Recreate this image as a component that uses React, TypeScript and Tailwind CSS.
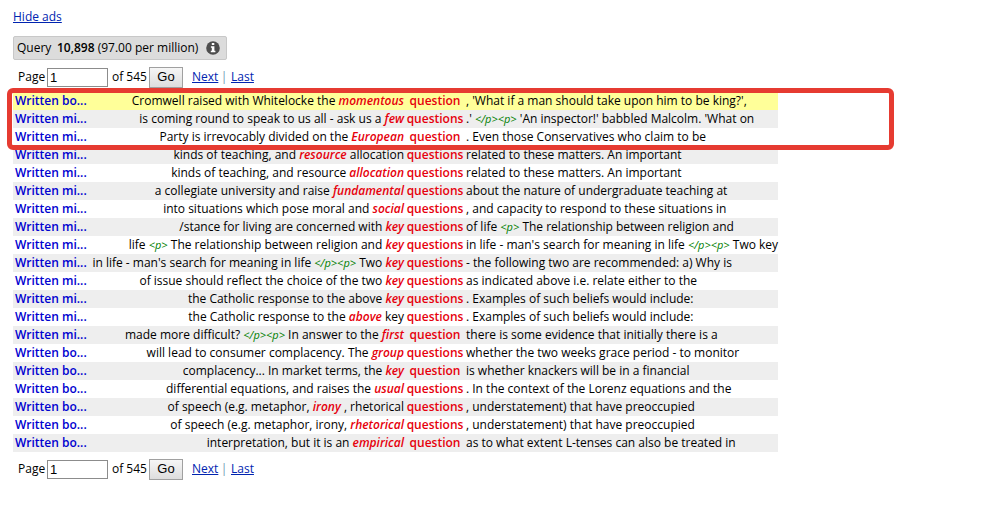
import { Fragment } from "react";

type Line = { source: "bo" | "mi"; left: string; node: string; right: string };

// *word* marks the collocate, <p> and </p> are structure tags of the corpus.
const lines: Line[] = [
  { source: "bo", left: "Cromwell raised with Whitelocke the *momentous*", node: "question", right: ", 'What if a man should take upon him to be king?'," },
  { source: "mi", left: "is coming round to speak to us all - ask us a *few*", node: "questions", right: ".' </p><p> 'An inspector!' babbled Malcolm. 'What on" },
  { source: "mi", left: "Party is irrevocably divided on the *European*", node: "question", right: ". Even those Conservatives who claim to be" },
  { source: "mi", left: "kinds of teaching, and *resource* allocation", node: "questions", right: "related to these matters. An important" },
  { source: "mi", left: "kinds of teaching, and resource *allocation*", node: "questions", right: "related to these matters. An important" },
  { source: "mi", left: "a collegiate university and raise *fundamental*", node: "questions", right: "about the nature of undergraduate teaching at" },
  { source: "mi", left: "into situations which pose moral and *social*", node: "questions", right: ", and capacity to respond to these situations in" },
  { source: "mi", left: "/stance for living are concerned with *key*", node: "questions", right: "of life <p> The relationship between religion and" },
  { source: "mi", left: "life <p> The relationship between religion and *key*", node: "questions", right: "in life - man's search for meaning in life </p><p> Two key" },
  { source: "mi", left: "in life - man's search for meaning in life </p><p> Two *key*", node: "questions", right: "- the following two are recommended: a) Why is" },
  { source: "mi", left: "of issue should reflect the choice of the two *key*", node: "questions", right: "as indicated above i.e. relate either to the" },
  { source: "mi", left: "the Catholic response to the above *key*", node: "questions", right: ". Examples of such beliefs would include:" },
  { source: "mi", left: "the Catholic response to the *above* key", node: "questions", right: ". Examples of such beliefs would include:" },
  { source: "mi", left: "made more difficult? </p><p> In answer to the *first*", node: "question", right: "there is some evidence that initially there is a" },
  { source: "bo", left: "will lead to consumer complacency. The *group*", node: "questions", right: "whether the two weeks grace period - to monitor" },
  { source: "bo", left: "complacency... In market terms, the *key*", node: "question", right: "is whether knackers will be in a financial" },
  { source: "bo", left: "differential equations, and raises the *usual*", node: "questions", right: ". In the context of the Lorenz equations and the" },
  { source: "bo", left: "of speech (e.g. metaphor, *irony* , rhetorical", node: "questions", right: ", understatement) that have preoccupied" },
  { source: "bo", left: "of speech (e.g. metaphor, irony, *rhetorical*", node: "questions", right: ", understatement) that have preoccupied" },
  { source: "bo", left: "interpretation, but it is an *empirical*", node: "question", right: "as to what extent L-tenses can also be treated in" },
];

function Context({ text }: { text: string }) {
  return (
    <>
      {text.split(/(\*\w+\*|(?:<\/?p>)+)/).map((part, i) => {
        if (part.startsWith("*")) {
          return <b key={i} className="font-semibold italic text-[#e6000c]">{part.slice(1, -1)}</b>;
        }
        if (part.startsWith("<")) {
          return <i key={i} className="text-[11px] text-[#008000]">{part}</i>;
        }
        return <Fragment key={i}>{part}</Fragment>;
      })}
    </>
  );
}

function Pager({ id }: { id: string }) {
  return (
    <form className="flex h-[22px] items-center pl-[5px]" onSubmit={(e) => e.preventDefault()}>
      <label htmlFor={id} className="w-[29px]">Page</label>
      <input
        id={id}
        defaultValue="1"
        className="h-[19px] w-[61px] border border-[#8c8c8c] bg-white px-0.5 font-['Liberation_Sans',Arial,sans-serif] text-[13px] outline-none"
      />
      <span className="ml-1 w-[37px] whitespace-nowrap">of 545</span>
      <button
        type="submit"
        className="h-[21px] w-[34px] border border-[#a0a0a0] bg-linear-to-b from-[#f6f6f6] to-[#dddddd] font-['Liberation_Sans',Arial,sans-serif] text-[13px]"
      >
        Go
      </button>
      <a href="#next" className="ml-[9px] w-[25px] text-[#0024b0] underline">Next</a>
      <span className="w-3.5 text-center text-[#6f95b5]">|</span>
      <a href="#last" className="text-[#0024b0] underline">Last</a>
    </form>
  );
}

export default function App() {
  return (
    <main className="min-h-screen bg-white px-[13px] pt-2 font-['Trebuchet_MS','Open_Sans',sans-serif] text-[12px] leading-[18px] text-black">
      <div><a href="#ads" className="text-[#0024b0] underline">Hide ads</a></div>

      <div className="mt-2.5 flex h-6 w-[214px] items-center rounded-xs border border-[#c8c8c8] bg-[#dcdcdc] pl-[3px] whitespace-nowrap">
        <span className="w-10">Query</span>
        <span className="w-[149px]"><b className="font-semibold">10,898</b> (97.00 per million)</span>
        <svg viewBox="0 0 14 14" className="size-3.5" role="img" aria-label="Info">
          <circle cx="7" cy="7" r="6.8" fill="#4d4d4d" />
          <path fill="#fff" d="M5.8 2h2.5v2H5.8zM4.9 5.3h3.5v4.4h1v1.5H4.8V9.7h1V6.8h-.9z" />
        </svg>
      </div>

      <div className="mt-1.5"><Pager id="page-top" /></div>

      <div className="relative mt-1 w-[765px]">
        <table className="w-full table-fixed border-collapse">
          <colgroup>
            <col className="w-[78px]" />
            <col className="w-[315px]" />
            <col className="w-[58px]" />
            <col />
          </colgroup>
          <tbody>
            {lines.map((line, i) => (
              <tr key={i} className={i === 0 ? "bg-[#ffff99]" : "odd:bg-white even:bg-[#eeeeee]"}>
                <td className="p-0 pl-0.5 font-semibold whitespace-nowrap text-[#0000d0]">Written {line.source}...</td>
                <td className="p-0 pr-0.5 whitespace-nowrap">
                  <div className="flex justify-end whitespace-pre"><span><Context text={line.left} /></span></div>
                </td>
                <td className="p-0 text-center font-semibold whitespace-nowrap text-[#e6000c]">{line.node}</td>
                <td className="p-0 pl-0.5 whitespace-nowrap"><Context text={line.right} /></td>
              </tr>
            ))}
          </tbody>
        </table>
        <div className="pointer-events-none absolute -top-1 -left-1.5 h-[62px] w-[887px] rounded-md border-5 border-[#e63b31]" />
      </div>

      <div className="mt-1.5"><Pager id="page-bottom" /></div>
    </main>
  );
}
